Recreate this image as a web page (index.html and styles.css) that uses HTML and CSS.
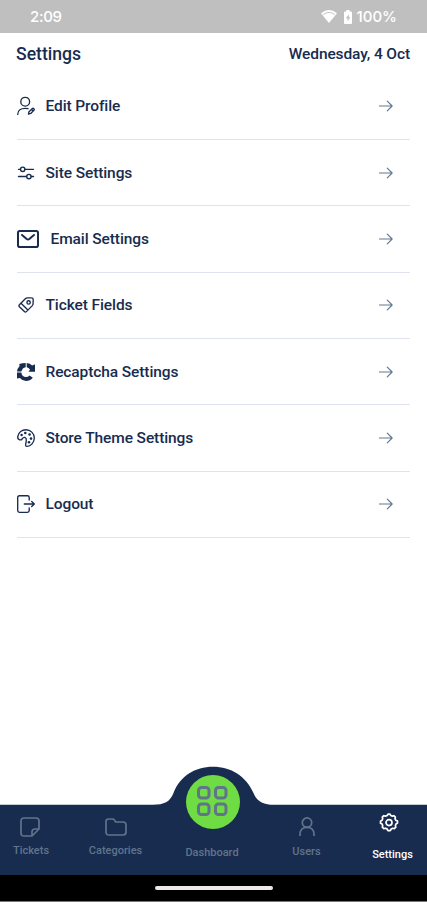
FILE: index.html
```html
<!DOCTYPE html>
<html lang="en">
<head>
<meta charset="utf-8">
<meta name="viewport" content="width=device-width">
<title>Settings</title>
<link rel="stylesheet" href="styles.css">
</head>
<body>
<div class="screen">
  <div class="status">
    <span class="clock">2:09</span>
    <span class="system">
      <svg class="wifi" width="16" height="13" viewBox="0 0 16 13"><path d="M0 3.2Q8-3 16 3.2L8 13Z" fill="#fff"/><path d="M2.2 4.5Q8 .4 13.8 4.5" fill="none" stroke="#bfbfbf" stroke-width=".9"/></svg>
      <svg class="battery" width="8" height="14" viewBox="0 0 8 14"><path d="M2.4 0h3.2v1.4H7a1 1 0 0 1 1 1V13a1 1 0 0 1-1 1H1a1 1 0 0 1-1-1V2.400a1 1 0 0 1 1-1h1.400z" fill="#fff"/><path d="M4.800 4.200 1.900 8.300h1.700v3.200l2.700-4.300H4.800z" fill="#bfbfbf"/></svg>
      <span class="percent">100%</span>
    </span>
  </div>
  <header class="header">
    <h1>Settings</h1>
    <span class="date">Wednesday, 4 Oct</span>
  </header>
  <main class="list">
    <a class="row">
      <svg class="icon" width="18" height="18" viewBox="0 0 18 18"><circle cx="8.200" cy="4.700" r="4.400"/><path d="M.7 17.400c0-3.900 3.300-6.100 7.600-6.100 1 0 1.900.1 2.700.4M11.500 17l.5-2.300 3.400-3.200c.9-.8 2.500.7 1.700 1.600l-3.300 3.300zM14.600 12.500l1.600 1.500"/></svg>
      <span class="label">Edit Profile</span>
      <svg class="arrow" width="14" height="12" viewBox="0 0 14 12"><path d="M.5 6h12.600M8.300 1.200 13.100 6l-4.800 4.800"/></svg>
    </a>
    <a class="row">
      <svg class="icon" width="18" height="18" viewBox="0 0 18 18"><path d="M1.500 5.300h1.900M8 5.300h8.500M1.500 12.500h8M14.200 12.500h2.300"/><circle cx="5.700" cy="5.300" r="2.200"/><circle cx="11.900" cy="12.500" r="2.200"/></svg>
      <span class="label">Site Settings</span>
      <svg class="arrow" width="14" height="12" viewBox="0 0 14 12"><path d="M.5 6h12.600M8.300 1.200 13.100 6l-4.800 4.800"/></svg>
    </a>
    <a class="row">
      <svg class="icon mail" width="22" height="18" viewBox="0 0 22 18"><rect x="1" y="1" width="20" height="16" rx="1.800"/><path d="m5 5 4.700 4q1.300 1 2.600 0L17 5"/></svg>
      <span class="label">Email Settings</span>
      <svg class="arrow" width="14" height="12" viewBox="0 0 14 12"><path d="M.5 6h12.600M8.300 1.200 13.100 6l-4.800 4.800"/></svg>
    </a>
    <a class="row">
      <svg class="icon" width="18" height="18" viewBox="0 0 18 18"><path d="m2.400 8.700 5.900-6q.9-.9 2.200-.9l4.100.1q1.600 0 1.600 1.600l-.1 4q0 1.200-.8 2.100l-5.900 6q-1 1-2 0l-5-4.900q-1-1 0-2zM4 7.200l6.900 6.900"/><circle cx="11.600" cy="6.400" r="1.700"/></svg>
      <span class="label">Ticket Fields</span>
      <svg class="arrow" width="14" height="12" viewBox="0 0 14 12"><path d="M.5 6h12.600M8.300 1.200 13.100 6l-4.800 4.800"/></svg>
    </a>
    <a class="row">
      <svg class="icon solid" width="18" height="18" viewBox="0 0 18 18"><path d="M9.700 0Q13 .2 15.200 2.400L17.500 1.500H18V8.800h-6.500l1.500-2Q11.800 4.500 9.700 4.200z"/><path d="M8.700 0v4.200Q5.300 4.800 4.400 8.500H0Q.2 5.500 2.600 2.900L2.300 1.100Q5 0 8.700 0z"/><path d="M0 9.500h4.400q.4 4.300 4.600 4.500 2 0 3.600-1.500l3.200 2.300Q13 18 9 18q-3.700-.1-6.200-2.900L0 15.500z"/></svg>
      <span class="label">Recaptcha Settings</span>
      <svg class="arrow" width="14" height="12" viewBox="0 0 14 12"><path d="M.5 6h12.600M8.300 1.200 13.100 6l-4.800 4.800"/></svg>
    </a>
    <a class="row">
      <svg class="icon" width="18" height="18" viewBox="0 0 18 18"><path d="M.8 7.300C1.600 3.400 5 .7 8.900.7c4.600 0 8.400 3.700 8.400 8.300s-3.500 8.300-7.300 8.300c-1.400 0-1.600-.9-1.300-2.100l.6-3.400c.2-1.100.1-2.700-1.200-3.300-1.500-.6-2.200.4-3 1.500C3.800 11.800.1 10.500.8 7.300z"/><g class="dots"><circle cx="4.600" cy="6" r="1.200"/><circle cx="8.300" cy="4" r="1.300"/><circle cx="12.600" cy="5.500" r="1.300"/><circle cx="14" cy="9.600" r="1.300"/><circle cx="12" cy="13.300" r="1.300"/></g></svg>
      <span class="label">Store Theme Settings</span>
      <svg class="arrow" width="14" height="12" viewBox="0 0 14 12"><path d="M.5 6h12.600M8.300 1.200 13.100 6l-4.800 4.800"/></svg>
    </a>
    <a class="row">
      <svg class="icon" width="18" height="18" viewBox="0 0 18 18"><path d="M12.200 5V2.500q0-1.800-1.800-1.800h-8Q.7.700.7 2.500v13q0 1.800 1.700 1.800h8q1.800 0 1.800-1.800V13M7.300 9h10M14.700 6.400 17.300 9l-2.600 2.600"/></svg>
      <span class="label">Logout</span>
      <svg class="arrow" width="14" height="12" viewBox="0 0 14 12"><path d="M.5 6h12.600M8.300 1.200 13.100 6l-4.800 4.800"/></svg>
    </a>
  </main>
  <nav class="nav">
    <svg class="nav-shape" width="427" height="109" viewBox="0 0 427 109"><path d="M0 38.700H153C164 38.700 170 36 173.500 27C180 10 195 .7 213 .7S246 10 253.500 27C257 36 264 38.700 274 38.700H427V109H0Z"/></svg>
    <a class="tab tickets">
      <svg width="20" height="20" viewBox="0 0 20 20"><path d="M4 1h12q3 0 3 3v8l-7 7H4q-3 0-3-3V4q0-3 3-3zM19 12h-4q-3 0-3 3v4"/></svg>
      <span>Tickets</span>
    </a>
    <a class="tab categories">
      <svg width="22" height="18" viewBox="0 0 22 18"><path d="M1 14V3.500Q1 1 3.500 1h4q1.300 0 2 1.100L10.700 4H18q3 0 3 3v7q0 3-3 3H4q-3 0-3-3z"/></svg>
      <span>Categories</span>
    </a>
    <a class="tab dashboard">
      <span class="disc"><svg width="31" height="31" viewBox="0 0 31 31"><rect x="1.500" y="1.500" width="10.500" height="10.500" rx="3"/><rect x="18.500" y="1.500" width="10.500" height="10.500" rx="3"/><rect x="1.500" y="18" width="10.500" height="10.500" rx="3"/><rect x="18.500" y="18" width="10.500" height="10.500" rx="3"/></svg></span>
      <span>Dashboard</span>
    </a>
    <a class="tab users">
      <svg width="16" height="20" viewBox="0 0 16 20"><circle cx="8" cy="5.600" r="4.700"/><path d="M1 19v-2c0-4 2.800-6.700 7-6.700s7 2.700 7 6.700v2"/></svg>
      <span>Users</span>
    </a>
    <a class="tab settings">
      <svg width="20" height="20" viewBox="0 0 20 20"><path d="M8.200 2.500 9 1.200h2l.8 1.300 1.600.6 1.400-.4 1.600 1.500-.4 1.500.7 1.500 1.800.9v2l-1.500.9-.6 1.600.4 1.600-1.500 1.500-1.500-.4-1.600.7-.9 1.600H8.900L8 15.900l-1.600-.7-1.600.5-1.500-1.500.4-1.600-.6-1.500-1.600-.9v-2l1.600-.9.600-1.500-.4-1.600 1.500-1.500 1.600.4z"/><circle cx="10" cy="9.600" r="3"/></svg>
      <span>Settings</span>
    </a>
  </nav>
  <div class="gesture"><span class="pill"></span></div>
</div>
</body>
</html>
```
FILE: styles.css
```css
* { box-sizing: border-box; }
body {
  margin: 0;
  background: #fff;
  color: #182c4f;
  font-family: Roboto, sans-serif;
  font-weight: 500;
}
.screen {
  width: 427px;
  height: 902px;
  display: flex;
  flex-direction: column;
  overflow: hidden;
}
.status {
  height: 33px;
  flex: none;
  padding: 0 30px;
  display: flex;
  align-items: center;
  justify-content: space-between;
  background: #bfbfbf;
  color: #fff;
  font-family: Inter, sans-serif;
  font-size: 15px;
}
.clock { letter-spacing: -.3px; }
.system { display: flex; align-items: center; }
.battery { margin: 0 5px 0 7px; }
.header {
  height: 40.7px;
  flex: none;
  padding: 1px 17px 0 16px;
  display: flex;
  align-items: center;
  justify-content: space-between;
}
h1 { margin: 0; font-size: 17.6px; font-weight: 500; line-height: 20px; }
.date { font-size: 15.5px; letter-spacing: -.1px; }
.list { flex: 1; padding: 0 17px; }
.row {
  height: 66.35px;
  padding-right: 17px;
  display: flex;
  align-items: center;
  border-bottom: 1px solid #dfe3ef;
}
.icon {
  flex: none;
  overflow: visible;
  fill: none;
  stroke: #182c4f;
  stroke-width: 1.35;
  stroke-linecap: round;
  stroke-linejoin: round;
}
.mail { stroke-width: 2; }
.solid { fill: #182c4f; stroke: none; }
.dots { fill: #182c4f; stroke: none; }
.label { margin-left: 10.500px; flex: 1; font-size: 15.500px; letter-spacing: -.1px; line-height: 20px; }
.mail + .label { margin-left: 11.500px; }
.arrow { fill: none; stroke: #637991; stroke-width: 1.2; stroke-linecap: round; stroke-linejoin: round; }
.nav {
  height: 109px;
  flex: none;
  display: grid;
  grid-template-columns: 62px 107px 86px 103px 69px;
  position: relative;
  color: #60748c;
}
.nav-shape { position: absolute; left: 0; top: 0; fill: #182c4f; }
.tab {
  position: relative;
  display: flex;
  flex-direction: column;
  align-items: center;
  font-size: 11px;
  line-height: 14px;
}
.tab svg { fill: none; stroke: currentColor; stroke-width: 1.7; stroke-linejoin: round; }
.tickets { padding-top: 50.500px; }
.tickets svg { margin: 0 3px 7.500px 0; }
.categories { padding-top: 51.500px; }
.categories svg { margin-bottom: 8.500px; }
.dashboard { padding-top: 9px; }
.disc {
  width: 54px;
  height: 54px;
  margin: 0 0 17px 2px;
  display: flex;
  align-items: center;
  justify-content: center;
  border-radius: 50%;
  background: #70dc43;
}
.disc svg { margin-right: 2px; margin-top: -1px; stroke-width: 3; }
.users { padding-top: 50.500px; }
.users svg { margin-bottom: 8.500px; }
.settings { padding-top: 46.500px; color: #fff; }
.settings svg { margin: 0 7px 15.500px 0; }
.gesture {
  height: 27px;
  flex: none;
  display: flex;
  justify-content: center;
  padding-top: 11px;
  background: #000;
  border-bottom: 1px solid #777;
}
.pill { width: 118px; height: 4px; border-radius: 2px; background: #eee9e9; }
```
